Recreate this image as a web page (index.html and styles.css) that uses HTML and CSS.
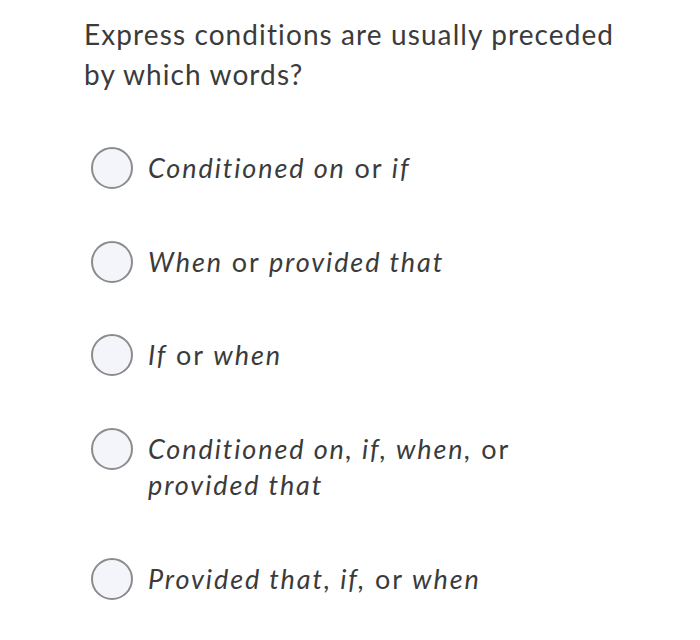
FILE: index.html
```html
<!DOCTYPE html>
<html>
<head>
<meta charset="utf-8">
<link rel="stylesheet" href="styles.css">
</head>
<body>
<div class="page">
  <h1 class="question">Express conditions are usually preceded by which words?</h1>
  <ul class="options">
    <li class="option"><span class="radio"></span><span class="label"><i>Conditioned on</i> or <i>if</i></span></li>
    <li class="option"><span class="radio"></span><span class="label"><i>When</i> or <i>provided that</i></span></li>
    <li class="option"><span class="radio"></span><span class="label"><i>If</i> or <i>when</i></span></li>
    <li class="option"><span class="radio"></span><span class="label"><i>Conditioned on, if, when,</i> or <i>provided that</i></span></li>
    <li class="option"><span class="radio"></span><span class="label"><i>Provided that, if,</i> or <i>when</i></span></li>
  </ul>
</div>
</body>
</html>
```
FILE: styles.css
```css
html, body {
  margin: 0;
  padding: 0;
  background: #ffffff;
  min-height: 640px;
}
.page {
  font-family: Lato, "Liberation Sans", sans-serif;
  color: #3b3b3b;
  padding: 14px 56px 30px 84px;
}
.question {
  margin: 0;
  font-size: 28px;
  font-weight: 400;
  line-height: 40px;
  letter-spacing: 1.1px;
  width: 560px;
}
.options {
  list-style: none;
  margin: 56px 0 0 7px;
  padding: 0;
  display: flex;
  flex-direction: column;
  gap: 57px;
}
.option {
  display: flex;
  align-items: flex-start;
  gap: 15px;
}
.radio {
  flex: none;
  width: 42px;
  height: 42px;
  box-sizing: border-box;
  border: 2px solid #8c8c8c;
  border-radius: 50%;
  background: #f4f5fa;
  margin: -3px 0 -3px 0;
}
.label {
  font-size: 27px;
  line-height: 36.5px;
  letter-spacing: 1.9px;
  width: 420px;
}
.label i {
  font-style: italic;
}
```
